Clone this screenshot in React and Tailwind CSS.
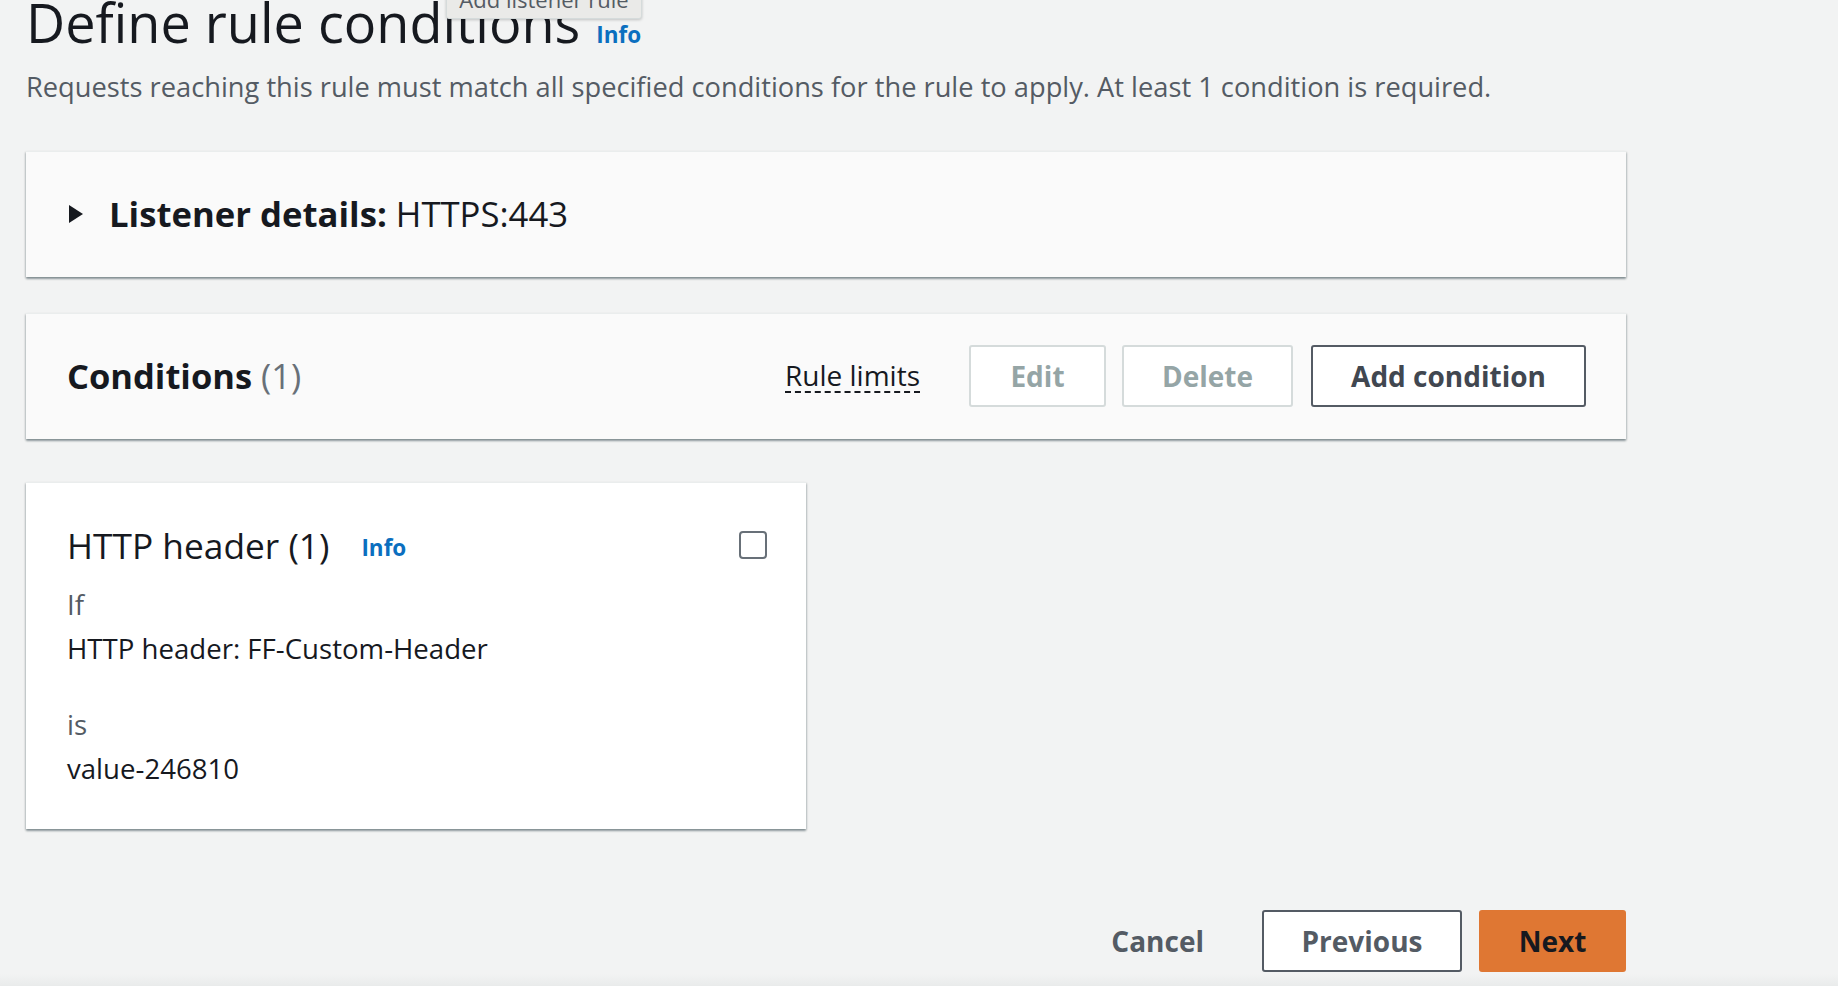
const Card = ({ className = "", children }) => (
  <div
    className={`border-t border-[#eaeded] shadow-[0_2px_2px_0_rgba(0,28,36,0.35),1px_1px_2px_0_rgba(0,28,36,0.12),-1px_1px_2px_0_rgba(0,28,36,0.12)] ${className}`}
  >
    {children}
  </div>
);

const App = () => {
  return (
    <div className="relative h-[986px] overflow-hidden bg-[#f2f3f3] font-['Open_Sans',sans-serif] text-[#16191f]">
      <div className="absolute left-[446px] top-[-22px] flex h-[41px] w-[196px] items-end justify-center rounded-[3px] border border-[#d5dbdb] bg-[#eaeae8] pb-[8px] text-[22px] leading-none text-[#545b64] shadow-[0_1px_3px_rgba(0,0,0,0.2)]">
        Add listener rule
      </div>

      <div className="w-[1626px] pl-[26px]">
        <div className="mt-[-4px] flex items-baseline gap-[16px]">
          <h1 className="text-[54px] font-normal leading-[53px]">Define rule conditions</h1>
          <a className="text-[22.5px] font-bold text-[#0b6fbf]">Info</a>
        </div>
        <p className="mt-[18px] text-[27.25px] leading-[34px] text-[#545b64]">
          Requests reaching this rule must match all specified conditions for the rule to apply. At least 1
          condition is required.
        </p>

        <Card className="mt-[47px] flex h-[126px] items-center bg-[#fafafa] pl-[42px]">
          <svg width="16" height="20" viewBox="0 0 16 20" className="shrink-0">
            <path d="M1 1 L15 10 L1 19 Z" fill="#16191f" />
          </svg>
          <span className="ml-[25px] text-[34.7px]">
            <span className="font-bold">Listener details:</span> HTTPS:443
          </span>
        </Card>

        <Card className="mt-[36px] flex h-[126px] items-center bg-[#fafafa] pl-[41px] pr-[40px]">
          <h2 className="text-[34.5px] font-bold">
            Conditions <span className="font-normal text-[#687078]">(1)</span>
          </h2>
          <div className="ml-auto flex items-center">
            <span className="mr-[49px] border-b-2 border-dashed border-[#16191f] text-[28px] leading-[32px]">
              Rule limits
            </span>
            <button className="h-[62px] w-[137px] rounded-[3px] border-2 border-[#d5dbdb] bg-white text-[28px] font-bold text-[#95a5a6]">
              Edit
            </button>
            <button className="ml-[16px] h-[62px] w-[171px] rounded-[3px] border-2 border-[#d5dbdb] bg-white text-[28px] font-bold text-[#95a5a6]">
              Delete
            </button>
            <button className="ml-[18px] h-[62px] w-[275px] rounded-[3px] border-2 border-[#545b64] bg-white text-[28px] font-bold text-[#414750]">
              Add condition
            </button>
          </div>
        </Card>

        <Card className="mt-[43px] h-[347px] w-[780px] bg-white pl-[41px] pr-[39px] pt-[40px]">
          <div className="flex items-center">
            <h3 className="text-[35.3px] font-normal leading-[44px]">HTTP header (1)</h3>
            <a className="ml-[32px] mt-[6px] text-[22.5px] font-bold text-[#0b6fbf]">Info</a>
            <span className="ml-auto h-[28px] w-[28px] rounded-[4px] border-2 border-[#687078] bg-white" />
          </div>
          <div className="mt-[15px] text-[27.6px] leading-[44px] text-[#545b64]">If</div>
          <div className="text-[27.6px] leading-[44px]">HTTP header: FF-Custom-Header</div>
          <div className="mt-[32px] text-[27.6px] leading-[44px] text-[#545b64]">is</div>
          <div className="text-[27.6px] leading-[44px]">value-246810</div>
        </Card>

        <div className="mt-[81px] flex items-center justify-end">
          <button className="mr-[58px] text-[28px] font-bold text-[#545b64]">Cancel</button>
          <button className="h-[62px] w-[200px] rounded-[3px] border-2 border-[#545b64] bg-white text-[28px] font-bold text-[#545b64]">
            Previous
          </button>
          <button className="ml-[17px] h-[62px] w-[147px] rounded-[3px] bg-[#df7733] text-[28px] font-bold text-[#16191f]">
            Next
          </button>
        </div>
      </div>

      <div className="absolute bottom-0 left-0 h-[12px] w-full bg-gradient-to-b from-[#f2f3f3] to-[#e9ebeb]" />
    </div>
  );
};

export default App;
